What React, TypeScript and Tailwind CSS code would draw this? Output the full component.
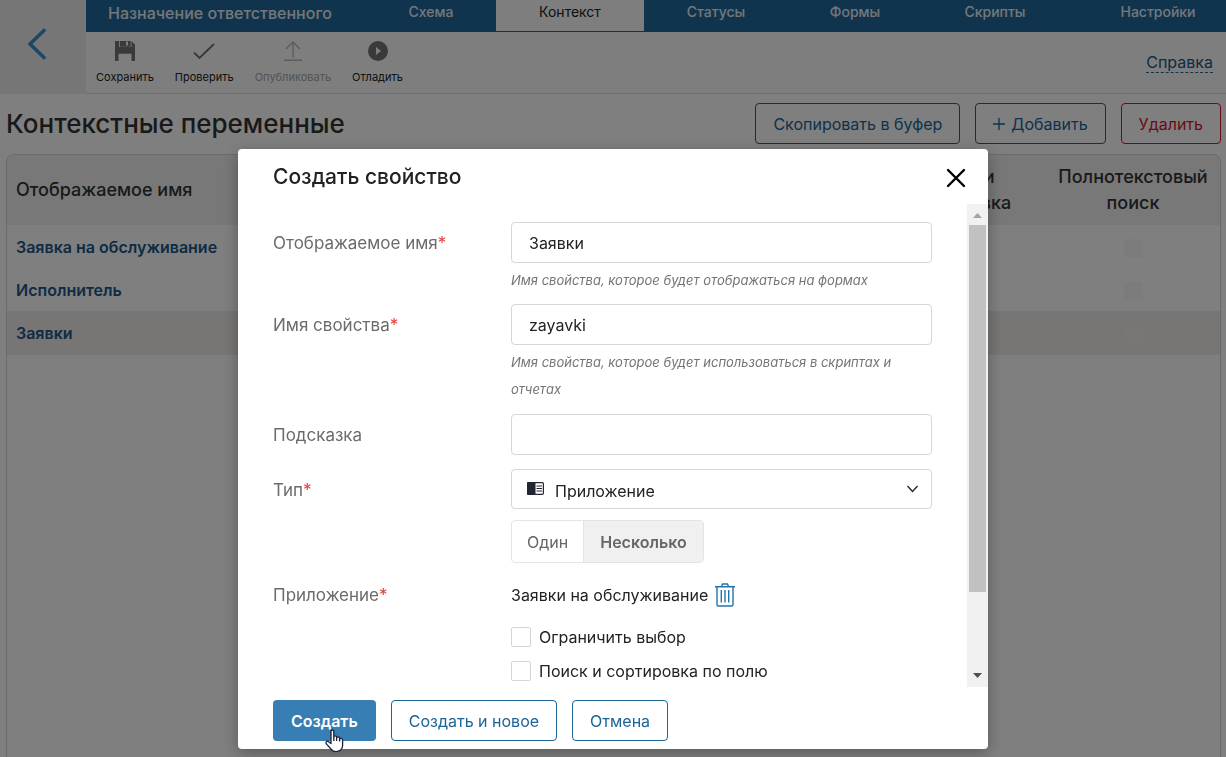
import React from "react";

const TABS = [
  { name: "Схема", width: "w-[130px]" },
  { name: "Контекст", width: "w-[148px]", active: true },
  { name: "Статусы", width: "w-[144px]" },
  { name: "Формы", width: "w-[134px]" },
  { name: "Скрипты", width: "w-[146px]" },
  { name: "Настройки", width: "w-[136px] ml-[22px]" },
];

const ROWS = ["Заявка на обслуживание", "Исполнитель", "Заявки"];

const outline = "flex h-[41px] items-center justify-center rounded border border-[#1a6496] px-[17px] text-base text-[#1a6496]";
const textField = "h-[41px] w-full rounded border border-[#d6d6d6] bg-white px-[17px] text-base text-[#222]";
const checkbox = "size-5 shrink-0 appearance-none rounded-[2px] border border-[#d5d5d5] bg-white";

function SaveIcon() {
  return (
    <svg width="20" height="20" viewBox="0 0 20 20" fill="#757575" aria-hidden="true">
      <path fillRule="evenodd" d="M0 0h4v6.500h12.500V0l3.500 3.500V20h-3.500v-7.500h-13V20H0zM4.800 0h10.900v5.700H4.800zM11 .5v4h2v-4z" />
      <path d="M0 6h20v6.500H0z" />
    </svg>
  );
}

function CheckIcon() {
  return (
    <svg width="22" height="20" viewBox="0 0 22 20" fill="none" stroke="#707070" strokeWidth="1.8" aria-hidden="true">
      <path d="M1 11.5 6.5 17 21 3" />
    </svg>
  );
}

function PublishIcon() {
  return (
    <svg width="20" height="20" viewBox="0 0 20 20" fill="none" stroke="#b8b8b8" strokeWidth="1.4" aria-hidden="true">
      <path d="M10 16.5V1M3 8l7-7 7 7M1 19.3h18" />
    </svg>
  );
}

function DebugIcon() {
  return (
    <svg width="20" height="20" viewBox="0 0 20 20" aria-hidden="true">
      <circle cx="10" cy="10" r="10" fill="#757575" />
      <path d="M8 6v8l5-4z" fill="#fcfcfc" />
    </svg>
  );
}

const TOOLS = [
  { name: "Сохранить", icon: <SaveIcon /> },
  { name: "Проверить", icon: <CheckIcon /> },
  { name: "Опубликовать", icon: <PublishIcon />, disabled: true },
  { name: "Отладить", icon: <DebugIcon /> },
];

function TopBar() {
  return (
    <header className="flex h-[94px] shrink-0">
      <button aria-label="Назад" className="flex w-[86px] shrink-0 items-center justify-center bg-[#ededed] pb-[6px] pr-[12px]">
        <svg width="18" height="32" viewBox="0 0 18 32" fill="none" stroke="#3490cb" strokeWidth="3.600" strokeLinecap="round" strokeLinejoin="round" aria-hidden="true">
          <path d="M16 2.500 2 16l14 13.500" />
        </svg>
      </button>
      <div className="flex min-w-0 flex-1 flex-col">
        <div className="flex h-8 shrink-0 bg-[#20689c]">
          <div className="flex-1 whitespace-nowrap pl-[22px] text-base leading-[27px] font-medium text-[#e8eef4]">Назначение ответственного</div>
          <nav className="flex">
            {TABS.map((t) => (
              <a
                key={t.name}
                href="#"
                className={`${t.width} h-[31px] text-center text-sm leading-6 ${t.active ? "bg-[#fcfcfc] text-[#222]" : "font-medium text-[#e8eef4]"}`}
              >
                {t.name}
              </a>
            ))}
          </nav>
        </div>
        <div className="flex flex-1 items-center justify-between border-b border-[#dcdcdc] bg-[#fcfcfc] pl-[10px] pr-[13px]">
          <div className="flex gap-[21px]">
            {TOOLS.map((t) => (
              <button key={t.name} disabled={t.disabled} className={`flex flex-col items-center gap-2 text-[11px] leading-4 ${t.disabled ? "text-[#a8a8a8]" : "text-[#222]"}`}>
                {t.icon}
                {t.name}
              </button>
            ))}
          </div>
          <a href="#" className="border-b border-dashed border-[#20689c] text-base leading-5 text-[#20568a]">Справка</a>
        </div>
      </div>
    </header>
  );
}

function Variables() {
  return (
    <main className="flex flex-1 flex-col pl-[6px] pr-[5px]">
      <div className="flex h-[60px] shrink-0 items-center justify-between pb-px">
        <h1 className="text-[26px] leading-8 font-medium text-[#333]">Контекстные переменные</h1>
        <div className="flex gap-[15px]">
          <button className={outline}>Скопировать в буфер</button>
          <button className={`${outline} gap-[6px]`}>
            <svg width="12" height="12" viewBox="0 0 12 12" stroke="currentColor" strokeWidth="1.3" aria-hidden="true">
              <path d="M6 0v12M0 6h12" />
            </svg>
            Добавить
          </button>
          <button className="flex h-[41px] items-center rounded border border-[#d9152c] px-[17px] text-base text-[#d9152c]">Удалить</button>
        </div>
      </div>
      <div className="flex-1 overflow-hidden rounded-t-lg border border-b-0 border-[#d4d4d4]">
        <table className="w-full table-fixed border-collapse text-base font-semibold">
          <thead className="bg-[#f0f0f0] text-lg text-[#333]">
            <tr className="h-[70px]">
              <th className="pl-[9px] text-left font-medium">Отображаемое имя</th>
              <th className="w-[174px] px-4 leading-[26px] font-medium">Поиск и сортировка</th>
              <th className="w-[174px] px-2 leading-[26px] font-medium">Полнотекстовый поиск</th>
            </tr>
          </thead>
          <tbody>
            {ROWS.map((r) => (
              <tr key={r} className={r === "Заявки" ? "h-[44px] bg-[#eeece8]" : "h-[43px]"}>
                <td className="pl-[9px]">
                  <a href="#" className="text-[#20568a]">{r}</a>
                </td>
                <td />
                <td className="text-center">
                  <input type="checkbox" disabled aria-label={`Полнотекстовый поиск: ${r}`} className={`size-[19px] appearance-none rounded-[2px] align-middle ${r === "Заявки" ? "bg-[#f0eeea]" : "bg-[#f9f9f9]"}`} />
                </td>
              </tr>
            ))}
          </tbody>
        </table>
      </div>
    </main>
  );
}

function Label({ text, htmlFor, required }: { text: string; htmlFor?: string; required?: boolean }) {
  return (
    <label htmlFor={htmlFor} className="w-[238px] shrink-0 text-[17px] leading-[43px] text-[#6b6b6b]">
      {text}
      {required && <span className="text-[#e53935]">*</span>}
    </label>
  );
}

function Dialog() {
  return (
    <div className="fixed inset-0 flex items-end justify-center bg-black/50 pb-2">
      <section role="dialog" aria-labelledby="dialog-title" className="flex w-full max-w-[750px] flex-col rounded bg-white shadow-[0_4px_16px_rgba(0,0,0,0.3)]">
        <div className="flex h-[55px] items-center justify-between pl-[35px] pr-[22px]">
          <h2 id="dialog-title" className="text-[21px] font-medium text-[#222]">Создать свойство</h2>
          <button aria-label="Закрыть" className="mt-[2px]">
            <svg width="20" height="20" viewBox="0 0 20 20" stroke="#000" strokeWidth="2.400" strokeLinecap="round" aria-hidden="true">
              <path d="m2 2 16 16M18 2 2 18" />
            </svg>
          </button>
        </div>
        <div className="flex h-[483px]">
          <form className="min-w-0 flex-1 overflow-hidden pl-[35px] pr-[35px] pt-[18px]">
            <div className="flex">
              <Label text="Отображаемое имя" htmlFor="title" required />
              <div className="flex-1">
                <input id="title" defaultValue="Заявки" className={textField} />
                <p className="pt-1 pb-[10px] text-[13px] leading-[27px] text-[#757575] italic">Имя свойства, которое будет отображаться на формах</p>
              </div>
            </div>
            <div className="flex">
              <Label text="Имя свойства" htmlFor="code" required />
              <div className="flex-1">
                <input id="code" defaultValue="zayavki" className={textField} />
                <p className="max-w-[400px] pt-1 pb-[11px] text-[13px] leading-[27px] text-[#757575] italic">Имя свойства, которое будет использоваться в скриптах и отчетах</p>
              </div>
            </div>
            <div className="flex pb-3">
              <Label text="Подсказка" htmlFor="hint" />
              <input id="hint" className={`${textField} min-w-0 flex-1`} />
            </div>
            <div className="flex">
              <Label text="Тип" htmlFor="type" required />
              <div className="flex-1">
                <div className="relative">
                  <select id="type" className="h-10 w-full appearance-none rounded border border-[#d6d6d6] bg-white pt-1 pl-[43px] text-base text-[#222]">
                    <option>Приложение</option>
                  </select>
                  <svg className="pointer-events-none absolute top-[13px] left-4" width="17" height="13" viewBox="0 0 17 13" aria-hidden="true">
                    <rect x="0.600" y="0.600" width="15.800" height="11.800" rx="1.200" fill="#fff" stroke="#222630" strokeWidth="1.200" />
                    <path d="M1 0h7.500v13H1a1 1 0 0 1-1-1V1a1 1 0 0 1 1-1z" fill="#222630" />
                    <path d="M9.500 4h5.500M9.500 6.500h5.500M9.500 9h5.500" stroke="#222630" strokeWidth="1" />
                  </svg>
                  <svg className="pointer-events-none absolute top-4 right-[14px]" width="11" height="8" viewBox="0 0 11 8" fill="none" stroke="#222" strokeWidth="1.300" aria-hidden="true">
                    <path d="M.5 1 5.500 6.500 10.500 1" />
                  </svg>
                </div>
                <div className="mt-[11px] flex h-[43px] w-fit overflow-hidden rounded border border-[#e4e4e4] text-base text-[#666]">
                  <button type="button" className="px-[15px]">Один</button>
                  <button type="button" aria-pressed="true" className="border-l border-[#e4e4e4] bg-[#f0f0f0] px-4 font-semibold">Несколько</button>
                </div>
              </div>
            </div>
            <div className="flex pt-[11px]">
              <Label text="Приложение" required />
              <div className="flex-1 text-base text-[#222]">
                <div className="flex h-[41px] items-center gap-[7px]">
                  Заявки на обслуживание
                  <button type="button" aria-label="Удалить приложение">
                    <svg width="20" height="24" viewBox="0 0 20 24" fill="none" stroke="#2374ab" strokeWidth="1.400" aria-hidden="true">
                      <path d="M0 3.700h20M6.500 3.500l1-2.500h5l1 2.500M2 4v17.500q0 1.500 1.500 1.500h13q1.500 0 1.500-1.500V4M6.300 7v12.500M10 7v12.500M13.700 7v12.500" />
                    </svg>
                  </button>
                </div>
                <label className="mt-[5px] flex h-[34px] items-center gap-2">
                  <input type="checkbox" className={checkbox} />
                  Ограничить выбор
                </label>
                <label className="flex h-[34px] items-center gap-2">
                  <input type="checkbox" className={checkbox} />
                  Поиск и сортировка по полю
                </label>
              </div>
            </div>
          </form>
          <div className="flex w-[21px] flex-col items-center bg-[#f1f1f1]" aria-hidden="true">
            <svg width="9" height="21" viewBox="0 0 9 21" className="shrink-0">
              <path d="m4.500 9 4.500 5H0z" fill="#a3a3a3" />
            </svg>
            <div className="h-[367px] w-[17px] bg-[#c1c1c1]" />
            <svg width="9" height="21" viewBox="0 0 9 21" className="mt-auto shrink-0">
              <path d="m4.500 12 4.500-5H0z" fill="#505050" />
            </svg>
          </div>
        </div>
        <footer className="flex h-[62px] gap-[15px] pt-[13px] pl-[35px]">
          <button className="relative h-[41px] rounded bg-[#367eb4] px-[18px] text-base font-semibold text-white">
            Создать
            <svg className="absolute top-[29px] left-[52px]" width="19" height="24" viewBox="0 0 19 24" fill="#fff" stroke="#1c2233" strokeWidth="1.300" strokeLinejoin="round" aria-hidden="true">
              <path d="M6 14.500V2.300Q6 1 7.400 1T8.800 2.300V8q0-1.200 1.400-1.200T11.600 8v1q.2-1.100 1.500-1.100T14.600 9.200v1q.3-1 1.600-.9T17.600 11v5.500q0 3-2 4.600-2 1.600-4.600 1.600-3 0-4.600-2.200L1.800 15.400Q.4 13.400 1.500 12.500T4 12.900z" />
              <path d="M8.800 8v4M11.600 9v3M14.600 10v2.500" fill="none" />
            </svg>
          </button>
          <button className={outline}>Создать и новое</button>
          <button className={outline}>Отмена</button>
        </footer>
      </section>
    </div>
  );
}

export default function App() {
  return (
    <div className="flex min-h-screen flex-col bg-white font-['Inter',sans-serif]">
      <TopBar />
      <Variables />
      <Dialog />
    </div>
  );
}
